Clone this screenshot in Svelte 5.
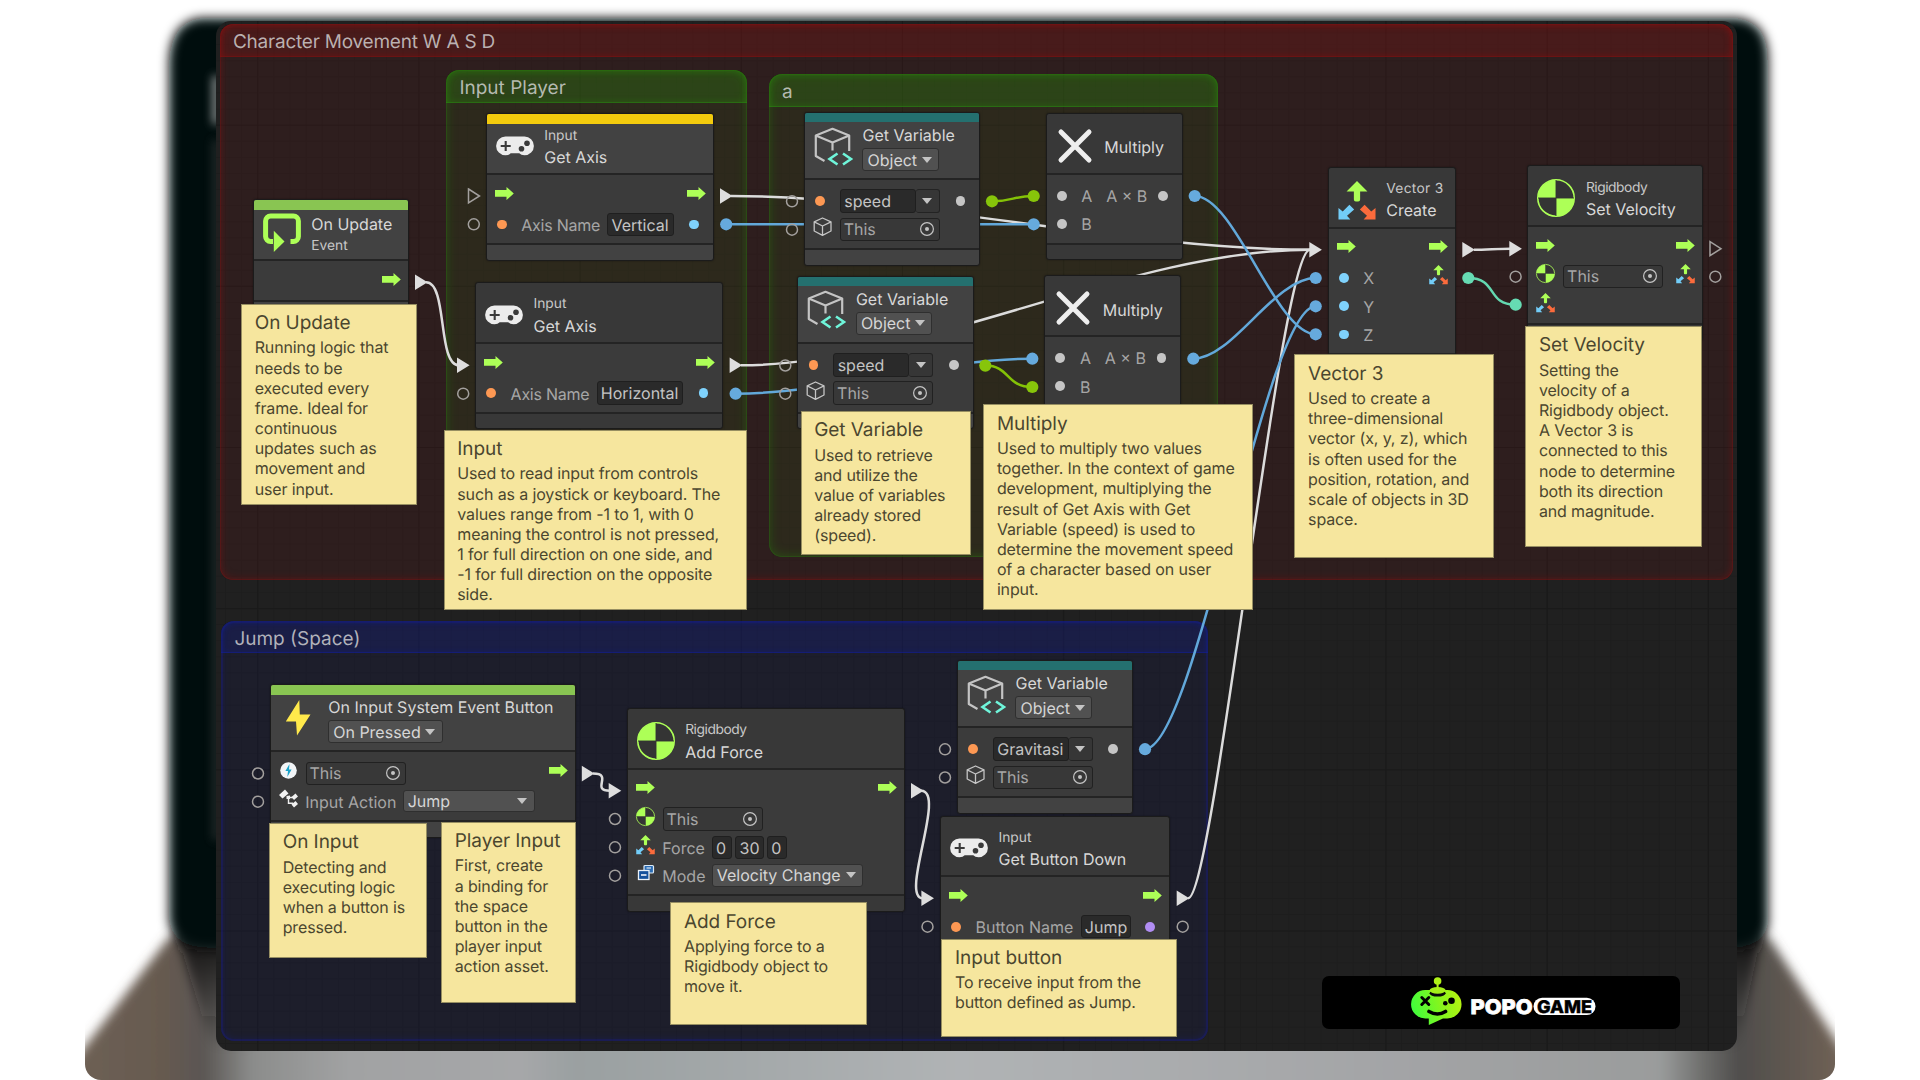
<script>
  // Comment groups of the graph, back to front.
  const groups = [
    { tone: 'red', title: 'Character Movement W A S D', x: 219.5, y: 24, w: 1513, h: 556 },
    { tone: 'green', title: 'Input Player', x: 446, y: 70, w: 301, h: 500 },
    { tone: 'green', title: 'a', x: 768.5, y: 74, w: 449.5, h: 483 },
    { tone: 'blue', title: 'Jump (Space)', x: 221, y: 620.5, w: 986.5, h: 420 }
  ];

  const flow = { in: 'flow', out: 'flow' };
  const variableRows = (name) => [
    { in: 'orange', combo: name, out: 'grey' },
    { in: 'cube', object: true }
  ];
  const multiplyRows = [
    { in: 'grey', label: 'A', end: 'A × B', out: 'grey' },
    { in: 'grey', label: 'B' }
  ];

  const nodes = [
    { x: 253, y: 200, w: 156.5, bar: '#89c552', icon: 'loop', title: 'On Update', after: 'Event', short: true, rows: [{ out: 'flow' }] },
    { x: 486, y: 114, w: 228.5, bar: '#f3cb0d', icon: 'pad', before: 'Input', title: 'Get Axis', rows: [flow, { in: 'orange', label: 'Axis Name', snug: true, field: 'Vertical', fw: 66.5, out: 'cyan' }] },
    { x: 475.3, y: 282.7, w: 248.5, icon: 'pad', before: 'Input', title: 'Get Axis', rows: [flow, { in: 'orange', label: 'Axis Name', snug: true, field: 'Horizontal', fw: 86.5, out: 'cyan' }] },
    { x: 804.3, y: 112.5, w: 176.5, bar: '#24706f', icon: 'variable', title: 'Get Variable', drop: 'Object', tall: true, rows: variableRows('speed') },
    { x: 797.7, y: 276.2, w: 176.5, bar: '#24706f', icon: 'variable', title: 'Get Variable', drop: 'Object', tall: true, rows: variableRows('speed') },
    { x: 1046, y: 113.5, w: 137.3, icon: 'times', title: 'Multiply', single: true, rows: multiplyRows },
    { x: 1044.6, y: 275.8, w: 137.3, icon: 'times', title: 'Multiply', single: true, rows: multiplyRows },
    { x: 1328, y: 167.3, w: 128.8, icon: 'vector', before: 'Vector 3', wide: true, title: 'Create', rows: [flow, { in: 'cyan', label: 'X', out: 'vector' }, { in: 'cyan', label: 'Y' }, { in: 'cyan', label: 'Z' }] },
    { x: 1527.7, y: 166, w: 176, icon: 'body', before: 'Rigidbody', tight: true, title: 'Set Velocity', rows: [flow, { in: 'body', object: true, out: 'vector' }, { in: 'vector' }] },
    { x: 270, y: 684.6, w: 306.3, bar: '#89c552', icon: 'bolt', title: 'On Input System Event Button', drop: 'On Pressed', tall: true, rows: [{ in: 'player', object: true, out: 'flow' }, { in: 'action', label: 'Input Action', drop: 'Jump', dw: 132 }] },
    { x: 627, y: 708.6, w: 278.3, icon: 'body', before: 'Rigidbody', tight: true, title: 'Add Force', rows: [flow, { in: 'body', object: true }, { in: 'vector', label: 'Force', triple: ['0', '30', '0'] }, { in: 'enum', label: 'Mode', drop: 'Velocity Change', dw: 151.5 }] },
    { x: 957.3, y: 660.5, w: 176.3, bar: '#24706f', icon: 'variable', title: 'Get Variable', drop: 'Object', tall: true, rows: variableRows('Gravitasi') },
    { x: 940.3, y: 816.2, w: 230.3, icon: 'pad', before: 'Input', title: 'Get Button Down', rows: [flow, { in: 'orange', label: 'Button Name', field: 'Jump', fw: 50.5, out: 'violet' }] }
  ];

  const notes = [
    { x: 241, y: 303.7, w: 176, h: 201.3, title: 'On Update', text: 'Running logic that\nneeds to be\nexecuted every\nframe. Ideal for\ncontinuous\nupdates such as\nmovement and\nuser input.' },
    { x: 443.6, y: 429.7, w: 303.4, h: 180, title: 'Input', text: 'Used to read input from controls\nsuch as a joystick or keyboard. The\nvalues range from -1 to 1, with 0\nmeaning the control is not pressed,\n1 for full direction on one side, and\n-1 for full direction on the opposite\nside.' },
    { x: 800.5, y: 411, w: 170.9, h: 144, title: 'Get Variable', text: 'Used to retrieve\nand utilize the\nvalue of variables\nalready stored\n(speed).' },
    { x: 983.2, y: 404.3, w: 270, h: 205.3, title: 'Multiply', text: 'Used to multiply two values\ntogether. In the context of game\ndevelopment, multiplying the\nresult of Get Axis with Get\nVariable (speed) is used to\ndetermine the movement speed\nof a character based on user\ninput.' },
    { x: 1294.4, y: 354.3, w: 199.3, h: 203.4, title: 'Vector 3', text: 'Used to create a\nthree-dimensional\nvector (x, y, z), which\nis often used for the\nposition, rotation, and\nscale of objects in 3D\nspace.' },
    { x: 1525.2, y: 326, w: 176.7, h: 221, title: 'Set Velocity', text: 'Setting the\nvelocity of a\nRigidbody object.\nA Vector 3 is\nconnected to this\nnode to determine\nboth its direction\nand magnitude.' },
    { x: 269, y: 823, w: 157.7, h: 134.7, title: 'On Input', text: 'Detecting and\nexecuting logic\nwhen a button is\npressed.' },
    { x: 441, y: 821.7, w: 134.7, h: 181.5, title: 'Player Input', text: 'First, create\na binding for\nthe space\nbutton in the\nplayer input\naction asset.' },
    { x: 670.3, y: 902.3, w: 196.5, h: 122.5, title: 'Add Force', text: 'Applying force to a\nRigidbody object to\nmove it.' },
    { x: 941.3, y: 938.5, w: 235.6, h: 98.5, title: 'Input button', text: 'To receive input from the\nbutton defined as Jump.' }
  ];

  const wires = [
    ['w', 'M731 196C912 196 1128 249.7 1310 249.7'],
    ['w', 'M741 365.3C918 365.3 1130 249.7 1310 249.7'],
    ['w', 'M426 282.3C448 282.3 437 365.3 459 365.3'],
    ['w', 'M1474 249.7C1486 249.7 1498 248.7 1510 248.7'],
    ['w', 'M1188 898.3C1214 898.3 1280 249.7 1310 249.7'],
    ['w', 'M593 773.6C614 773.6 590 790.7 610 790.7'],
    ['w', 'M921 790.7C947 790.7 899 898.3 923 898.3'],
    ['b', 'M726 224.3H1034'],
    ['b', 'M735.5 393.7C830 393.7 938 358.7 1032 358.7'],
    ['b', 'M1194.7 196C1235 196 1276 334.3 1315.7 334.3'],
    ['b', 'M1193.3 358.7C1233 358.7 1274 278 1315.7 278'],
    ['b', 'M1145 749C1195 749 1266 306.3 1315.7 306.3'],
    ['g', 'M992 201.3C1014 201.3 1012 196 1034 196'],
    ['g', 'M985.3 365.6C1010 365.6 1006 387 1032.3 387'],
    ['t', 'M1468.3 278C1498 278 1486 304.7 1515.7 304.7']
  ];
  const tips = [[720, 196], [729.6, 365.3], [415, 282.3], [457, 365.3], [1309.3, 249.7], [1462.3, 249.7], [1509.3, 248.7], [581.8, 773.6], [608.7, 790.7], [911, 790.7], [921.4, 898.3], [1176.7, 898.3]];
  const idleTips = [[468.5, 196], [1710, 248.7]];
  const idlePorts = [[473.8, 224.3], [463.2, 393.7], [792, 201.3], [792, 229.7], [785.3, 365.5], [785.3, 393.7], [1515.6, 276.7], [1715.3, 276.7], [258, 773.5], [258, 801.7], [615, 819], [615, 847.3], [615, 875.7], [945, 749.3], [945, 777.5], [927.5, 926.7], [1182.7, 926.7]];
  const livePorts = [
    ['b', 726.2, 224.3], ['b', 735.6, 393.7], ['b', 1033.7, 224.3], ['b', 1032.3, 358.7], ['b', 1194.7, 196], ['b', 1193.3, 358.7],
    ['b', 1315.7, 278], ['b', 1315.7, 306.3], ['b', 1315.7, 334.3], ['b', 1145, 749.2], ['g', 992, 201.3], ['g', 1033.7, 196],
    ['g', 985.3, 365.6], ['g', 1032.3, 387], ['t', 1468.3, 278], ['t', 1515.7, 304.7]
  ];
</script>

{#snippet arrow()}
  <svg class="glyph" viewBox="0 0 19 19"><path d="M0 6h11.5V3l7.3 6.5-7.3 6.5v-3.2H0z" fill="#adff57" /></svg>
{/snippet}

{#snippet vector(size)}
  <svg class={size} viewBox="0 0 40 40">
    <path d="M20 0 31 11H23.3V19.500a2 2 0 0 1-2 2H18.700a2 2 0 0 1-2-2V11H9z" fill="#adff57" />
    <path d="M12 25 17 30 9.500 36.500 13 40.500H0.500V28.500L5 32z" fill="#72cdf8" />
    <path d="M28 25 23 30 30.500 36.500 27 40.500H39.500V28.500L35 32z" fill="#fb6b3c" />
  </svg>
{/snippet}

{#snippet body(size)}
  <svg class={size} viewBox="0 0 38 38">
    <circle cx="19" cy="19" r="18.200" fill="#343434" stroke="#adff57" stroke-width="1.600" />
    <path d="M19 19V.800A18.200 18.200 0 0 0 .800 19zM19 19V37.200A18.200 18.200 0 0 0 37.200 19z" fill="#adff57" />
    <path d="M19 1V37M1 19H37" stroke="#343434" stroke-width=".9" />
  </svg>
{/snippet}

{#snippet glyph(kind)}
  {#if kind === 'flow'}
    <span class="slot">{@render arrow()}</span>
  {:else if kind === 'vector'}
    <span class="slot">{@render vector('glyph')}</span>
  {:else if kind === 'body'}
    <span class="slot">{@render body('glyph')}</span>
  {:else if kind === 'cube'}
    <span class="slot">
      <svg class="glyph" viewBox="0 0 19 19" fill="none" stroke="#c4c4c4" stroke-width="1.300" stroke-linejoin="round"><path d="M9.500 1 18 4.800V14L9.500 18.400 1.200 14V4.800zM1.200 4.800 9.500 9 18 4.800M9.500 9V18" /></svg>
    </span>
  {:else if kind === 'player'}
    <span class="slot">
      <svg class="glyph" viewBox="0 0 19 19"><circle cx="9.500" cy="9.500" r="8.300" fill="#f2f5f7" /><path d="M10.500 3 6.400 10H9L8.300 16 12.600 8.500H10z" fill="#1ba3c9" /></svg>
    </span>
  {:else if kind === 'action'}
    <span class="slot">
      <svg class="glyph" viewBox="0 0 19 19"><path d="M9.500 8.500V14.200H14M9.500 8.500H14" fill="none" stroke="#eee" stroke-width="1.400" /><path d="M0 6 6 .500 9.500 4.500 3.500 9.500zM12.500 8 16.500 4.500 19 7.500 15 11zM12.500 15.500 16.500 12 19 15 15 18.500z" fill="#f0f0f0" /><path d="M7.500 7 11 6.500 11 10 7.500 10z" fill="#eee" /></svg>
    </span>
  {:else if kind === 'enum'}
    <span class="slot">
      <svg class="glyph" viewBox="0 0 19 19"><rect x="8" y="2.500" width="9.500" height="7.500" rx="1" fill="#2b6cb3" stroke="#dce9f5" stroke-width="1.200" /><path d="M10.500 5H15" stroke="#fff" stroke-width="1.200" /><rect x="2.500" y="7.500" width="10.500" height="9" fill="#15529c" stroke="#e9f1f8" stroke-width="1.300" /><path d="M5 12H10.500" stroke="#fff" stroke-width="1.600" /></svg>
    </span>
  {:else if kind}
    <span class="slot"><i class="dot {kind}"></i></span>
  {:else}
    <span class="slot"></span>
  {/if}
{/snippet}

{#snippet headIcon(kind)}
  {#if kind === 'pad'}
    <svg class="big" viewBox="0 0 38 38">
      <path d="M9.500 9.500H28.500A9.400 9.400 0 0 1 28.500 28.300Q25 28.300 23.300 26.300H14.700Q13 28.300 9.500 28.300A9.400 9.400 0 0 1 9.500 9.500z" fill="#ececec" />
      <path d="M9.700 14V24M4.700 19H14.700" stroke="#3a3a3a" stroke-width="2.100" />
      <circle cx="31" cy="16.300" r="2.800" fill="#3a3a3a" /><circle cx="25.500" cy="21.700" r="2.800" fill="#3a3a3a" />
    </svg>
  {:else if kind === 'loop'}
    <svg class="big" viewBox="0 0 38 38">
      <path d="M10 28.500H7.500A5 5 0 0 1 2.600 23.500V8A5 5 0 0 1 7.600 3H30.400A5 5 0 0 1 35.400 8V23.500A5 5 0 0 1 30.400 28.500H27.500" fill="none" stroke="#adff57" stroke-width="5" />
      <path d="M10.800 17.800 21.500 28.500 10.800 39z" fill="#adff57" />
    </svg>
  {:else if kind === 'variable'}
    <svg class="big" viewBox="0 0 38 38" fill="none">
      <path d="M10.500 33 1.800 28V7.500L18.500 .800 35.200 7.500V23M1.800 7.500 18.500 14.500 35.200 7.500M18.500 14.500V22.500" stroke="#c4c4c4" stroke-width="2.200" stroke-linejoin="round" />
      <path d="M23.500 25.500 15.500 31 23.500 36.500M29 25.500 37 31 29 36.500" stroke="#6ff5da" stroke-width="2.600" />
    </svg>
  {:else if kind === 'times'}
    <svg class="big" viewBox="0 0 38 38"><path d="M5 5 33 33M33 5 5 33" stroke="#eee" stroke-width="5" stroke-linecap="round" /></svg>
  {:else if kind === 'vector'}
    {@render vector('big')}
  {:else if kind === 'body'}
    {@render body('big')}
  {:else}
    <svg class="big" viewBox="0 0 38 38"><path d="M19.300 0 5.800 21.500H16L17 35.500 30.500 14.500H19.800z" fill="#ffe94b" /></svg>
  {/if}
{/snippet}

{#snippet caret()}
  <svg class="caret" viewBox="0 0 10 6"><path d="M0 0H10L5 6z" fill="#c4c4c4" /></svg>
{/snippet}

{#snippet target()}
  <svg class="target" viewBox="0 0 16 16"><circle cx="8" cy="8" r="6.400" fill="none" stroke="#c4c4c4" stroke-width="1.200" /><circle cx="8" cy="8" r="2" fill="#c4c4c4" /></svg>
{/snippet}

<main>
  <svg class="laptop" viewBox="0 0 1920 1080" aria-hidden="true">
    <defs>
      <linearGradient id="deck" x1="85" x2="1835" y1="0" y2="0" gradientUnits="userSpaceOnUse">
        <stop offset="0" stop-color="#6d5f53" /><stop offset=".045" stop-color="#665a50" /><stop offset=".068" stop-color="#5a5653" />
        <stop offset=".095" stop-color="#8b8c8b" /><stop offset=".15" stop-color="#a1a2a3" /><stop offset=".25" stop-color="#a6a7a9" />
        <stop offset=".28" stop-color="#9aa0a1" /><stop offset=".5" stop-color="#b0b3b5" /><stop offset=".75" stop-color="#a3a4a6" />
        <stop offset=".9" stop-color="#9a9c9c" /><stop offset=".925" stop-color="#6d6d6b" /><stop offset=".945" stop-color="#4f4d4c" />
        <stop offset=".97" stop-color="#5d5650" /><stop offset="1" stop-color="#6e6054" />
      </linearGradient>
      <linearGradient id="fade" x1="0" x2="0" y1="930" y2="1050" gradientUnits="userSpaceOnUse">
        <stop offset="0" stop-color="#141414" stop-opacity="1" /><stop offset="1" stop-color="#141414" stop-opacity="0" />
      </linearGradient>
      <filter id="soft" x="-10%" y="-10%" width="120%" height="120%"><feGaussianBlur stdDeviation="5.500" /></filter>
      <filter id="softer" x="-400%" y="-30%" width="900%" height="160%"><feGaussianBlur stdDeviation="5" /></filter>
      <clipPath id="base"><path d="M85 0H1835V1064A16 16 0 0 1 1819 1080H101A16 16 0 0 1 85 1064z" /></clipPath>
    </defs>
    <g clip-path="url(#base)">
      <path d="M170 936H1768L1870 1092V1130H50V1092z" fill="url(#deck)" filter="url(#soft)" />
      <path d="M176 930H250V1060H215z" fill="url(#fade)" filter="url(#soft)" />
      <path d="M1690 930H1762L1735 1060H1690z" fill="url(#fade)" filter="url(#soft)" />
      <path d="M200 18H1738Q1768 22 1768 60V925Q1764 945 1737 948H208Q172 948 169 920V60Q171 22 200 18z" fill="#040707" filter="url(#soft)" />
      <rect x="213" y="76" width="6" height="48" fill="#ddd" opacity=".8" filter="url(#softer)" />
      <rect x="213" y="140" width="6" height="700" fill="#555" opacity=".5" filter="url(#softer)" />
    </g>
  </svg>

  <section class="canvas"></section>

  {#each groups as g}
    <section class="group {g.tone}" style="left:{g.x}px;top:{g.y}px;width:{g.w}px;height:{g.h}px"><h2>{g.title}</h2></section>
  {/each}

  <svg class="layer" viewBox="0 0 1920 1080" aria-hidden="true">
    {#each wires as [tone, d]}<path class="wire s-{tone}" {d} />{/each}
  </svg>

  {#each nodes as n}
    <article class="node" class:plain={!n.bar} style="left:{n.x}px;top:{n.y}px;width:{n.w}px">
      {#if n.bar}<div class="bar" style="background:{n.bar}"></div>{/if}
      <header class:tall={n.tall}>
        {@render headIcon(n.icon)}
        <div class="titles" class:single={n.single}>
          {#if n.before}<small class:tight={n.tight} class:wide={n.wide}>{n.before}</small>{/if}
          <b>{n.title}</b>
          {#if n.after}<small>{n.after}</small>{/if}
          {#if n.drop}<span class="drop"><span>{n.drop}</span>{@render caret()}</span>{/if}
        </div>
      </header>
      <div class="rows" class:short={n.short}>
        {#each n.rows as r}
          <div class="row">
            {@render glyph(r.in)}
            {#if r.label}<span class="label" class:snug={r.snug}>{r.label}</span>{/if}
            {#if r.field}<span class="field" style="width:{r.fw}px">{r.field}</span>{/if}
            {#if r.triple}<span class="triple">{#each r.triple as v}<span class="field num">{v}</span>{/each}</span>{/if}
            {#if r.combo}<span class="combo"><span class="field">{r.combo}</span><span class="pick">{@render caret()}</span></span>{/if}
            {#if r.object}<span class="object"><span>This</span>{@render target()}</span>{/if}
            {#if r.drop}<span class="drop" style="width:{r.dw}px"><span>{r.drop}</span>{@render caret()}</span>{/if}
            <span class="gap"></span>
            {#if r.end}<span class="label">{r.end}</span>{/if}
            {#if r.out}{@render glyph(r.out)}{/if}
          </div>
        {/each}
      </div>
      <footer></footer>
    </article>
  {/each}

  <svg class="layer" viewBox="0 0 1920 1080" aria-hidden="true">
    {#each tips as [x, y]}<path d="M{x} {y - 7.8}L{x + 12.6} {y}L{x} {y + 7.8}z" fill="#dedede" />{/each}
    {#each idleTips as [x, y]}<path d="M{x} {y - 7}L{x + 11} {y}L{x} {y + 7}z" class="idle" />{/each}
    {#each idlePorts as [x, y]}<circle cx={x} cy={y} r="5.500" class="idle" />{/each}
    {#each livePorts as [tone, x, y]}<circle cx={x} cy={y} r="6.100" class="f-{tone}" />{/each}
  </svg>

  {#each notes as n}
    <aside class="note" style="left:{n.x}px;top:{n.y}px;width:{n.w}px;height:{n.h}px">
      <h3>{n.title}</h3>
      <p>{n.text}</p>
    </aside>
  {/each}

  <div class="brand">
    <svg viewBox="0 0 190 53" role="img" aria-label="Popogame">
      <defs><linearGradient id="lime" x1="0" x2="1" y1=".6" y2=".4"><stop offset="0" stop-color="#3dfc3e" /><stop offset=".6" stop-color="#86f51d" /><stop offset="1" stop-color="#b4f212" /></linearGradient></defs>
      <path d="M16.300 14H38.300A14 14 0 0 1 38.300 42.500H34L19.800 49V42.500H16.300A14 14 0 0 1 16.300 14z" fill="url(#lime)" />
      <ellipse cx="28.600" cy="17.300" rx="8" ry="3.300" fill="#0a0a0a" />
      <ellipse cx="28.600" cy="14.300" rx="8" ry="3.400" fill="#a3ee1a" />
      <path d="M28.600 6V14" stroke="#b0f218" stroke-width="2" /><circle cx="28.600" cy="5" r="3.800" fill="#b0f218" />
      <path d="M12.800 21.500 19.800 28.500M19.800 21.500 12.800 28.500" stroke="#000" stroke-width="3" stroke-linecap="round" />
      <circle cx="42.500" cy="24.700" r="3.300" /><circle cx="36.300" cy="27.200" r="2.300" />
      <path d="M20 35.500Q28.500 40.500 36.500 35.500" fill="none" stroke="#000" stroke-width="3.600" stroke-linecap="round" />
      <text x="61.500" y="37.500" textLength="62" lengthAdjust="spacingAndGlyphs" fill="#fff" stroke="#fff">POPO</text>
      <rect x="124.500" y="21.700" width="62" height="17.300" rx="8.600" fill="#fff" />
      <text x="128" y="36.600" textLength="55" lengthAdjust="spacingAndGlyphs" class="small">GAME</text>
    </svg>
  </div>
</main>

<style>
  :global(body) { margin: 0; background: #fff; }
  main { position: relative; width: 1920px; height: 1080px; overflow: hidden; background: #fff; font-family: Inter, sans-serif; font-size: 16px; color: #c4c4c4; text-rendering: geometricPrecision; }
  .laptop, .layer { position: absolute; inset: 0; width: 1920px; height: 1080px; }
  .canvas {
    position: absolute; left: 216px; top: 21px; width: 1521px; height: 1030px; border-radius: 15px; background-color: #202020;
    background-image:
      linear-gradient(90deg, #191919 1.3px, transparent 1.3px), linear-gradient(#191919 1.3px, transparent 1.3px),
      linear-gradient(90deg, #1d1d1d 1px, transparent 1px), linear-gradient(#1d1d1d 1px, transparent 1px);
    background-size: 161.2px 161.2px, 161.2px 161.2px, 16.12px 16.12px, 16.12px 16.12px;
    background-position: 41.3px 0, 0 103.7px, 41.3px 0, 0 103.7px;
  }

  .group { position: absolute; box-sizing: border-box; border-radius: 13px; }
  .group h2 { margin: 0; box-sizing: border-box; height: 32.6px; padding: 2px 0 0 13.4px; border-radius: 13px 13px 0 0; font-size: 19px; font-weight: 400; line-height: 32px; color: rgba(220, 220, 220, .78); }
  .red { background: rgba(180, 20, 20, .1); box-shadow: inset 0 0 9px rgba(150, 15, 15, .5), inset 0 0 0 1px rgba(120, 20, 20, .3); }
  .red h2 { letter-spacing: -.22px; background: rgba(150, 20, 20, .25); box-shadow: inset 0 0 7px rgba(150, 10, 10, .5), inset 0 -1px rgba(120, 20, 20, .5); }
  .green { background: rgba(40, 150, 20, .1); box-shadow: inset 0 0 12px rgba(40, 130, 10, .45), inset 0 0 0 1px rgba(40, 110, 20, .3); }
  .green h2 { background: rgba(44, 150, 10, .25); box-shadow: inset 0 0 7px rgba(40, 150, 10, .4), inset 0 -1px rgba(40, 130, 20, .5); }
  .blue { background: rgba(10, 20, 150, .1); box-shadow: inset 0 0 9px rgba(20, 30, 170, .35), inset 0 0 0 2px rgba(25, 30, 130, .3); }
  .blue h2 { background: rgba(20, 30, 150, .25); box-shadow: inset 0 0 6px rgba(15, 30, 150, .45), inset 0 -1px rgba(20, 30, 150, .5); }

  .wire { fill: none; stroke-width: 2.5; }
  .s-w { stroke: #dcdcdc; }
  .s-b { stroke: #62a8da; }
  .s-g { stroke: #84c207; }
  .s-t { stroke: #63d8b0; }
  .f-b { fill: #66aadd; }
  .f-g { fill: #87c50a; }
  .f-t { fill: #66dbb3; }
  .idle { fill: none; stroke: #a3a09e; stroke-width: 1.5; }

  .node { position: absolute; box-sizing: border-box; margin: -.6px 0 0 -.5px; border: 1.5px solid #1b1b1b; border-radius: 3px; background: #424242; overflow: hidden; box-shadow: 0 0 2px rgba(0, 0, 0, .4); }
  .node.plain { background: #383838; }
  .bar { height: 9.5px; margin-bottom: -9.5px; }
  header { display: flex; gap: 10.7px; box-sizing: border-box; height: 60.8px; padding: 12.9px 8px 0 9px; border-bottom: 2px solid #242424; }
  header.tall { height: 67.3px; padding-top: 14.9px; }
  .big { flex: none; width: 38px; height: 38px; overflow: visible; }
  .titles { display: flex; flex-direction: column; align-items: flex-start; margin-top: -1.8px; }
  header.tall .titles { margin-top: -4.8px; }
  .titles.single { margin-top: 8.6px; }
  .titles b { font-weight: 400; line-height: 24px; color: #d8d8d8; white-space: nowrap; }
  .titles small { font-size: 13.8px; line-height: 20px; color: #c8c8c8; white-space: nowrap; }
  .titles small + b { margin-top: -.5px; }
  .titles small.tight { letter-spacing: -.45px; }
  .titles small.wide { letter-spacing: .3px; }
  .titles .drop { margin-top: 1.4px; }

  .rows { padding: 6.8px 7.2px 4.4px 8px; background: #3b3b3b; border-bottom: 2px solid #242424; }
  .rows.short { padding-bottom: 3.5px; }
  .row { display: flex; align-items: center; gap: 8.3px; height: 28.33px; }
  .slot { flex: none; width: 19px; display: flex; align-items: center; }
  .glyph { width: 19px; height: 19px; overflow: visible; margin-top: -5.6px; }
  .dot { width: 9.8px; height: 9.8px; margin: 0 0 0 2.4px; border-radius: 50%; }
  .orange { background: #fd9853; }
  .cyan { background: #7fd2fc; }
  .grey { background: #c5c5c5; }
  .violet { background: #b18df3; }
  .gap { flex: 1; margin: 0 -8.3px; }
  .label { color: #a6a6a6; line-height: 20px; padding-top: 1px; margin-left: -.5px; white-space: nowrap; }
  .label.snug { letter-spacing: -.25px; }
  footer { height: 14.5px; }

  .field { box-sizing: border-box; height: 23.5px; padding: 1px 0 0 3.2px; border: 1.3px solid #1f1f1f; border-radius: 3px; background: #2a2a2a; line-height: 20px; color: #c4c4c4; white-space: nowrap; }
  .label + .field { margin-left: -1px; }
  .triple { display: flex; gap: 3.2px; margin-left: -1.5px; }
  .num { padding-right: 3.2px; min-width: 20.5px; }
  .combo { display: flex; width: 99.5px; height: 23.5px; }
  .combo .field { width: 76px; }
  .pick { flex: 1; box-sizing: border-box; display: flex; align-items: center; justify-content: center; border: 1.3px solid #232323; border-left: 0; border-radius: 3px; background: #363636; }
  .object { box-sizing: border-box; display: flex; justify-content: space-between; align-items: center; width: 100px; height: 23.5px; padding: 0 4.3px 0 2.6px; border: 1.6px solid #212121; border-radius: 3px; background: #383838; color: #a6a6a6; line-height: 20px; }
  .target { width: 16px; height: 16px; }
  .caret { flex: none; width: 10px; height: 6px; }
  .drop { box-sizing: border-box; display: flex; align-items: center; justify-content: space-between; gap: 4.5px; height: 22.6px; padding: 0 6.5px 0 4px; border: 1.2px solid #2f2f2f; border-radius: 3px; background: #515151; color: #d6d6d6; line-height: 20px; white-space: nowrap; }
  .row .drop { margin: -1px 0 0 -2px; }

  .note { position: absolute; box-sizing: border-box; border: 1px solid #978f62; background: #f6e69e; color: #4b462f; padding: 6.3px 0 0 12.7px; }
  .note h3 { margin: 0 0 2.4px; font-size: 19px; font-weight: 400; line-height: 24px; white-space: nowrap; letter-spacing: -.06px; }
  .note p { margin: 0; font-size: 16px; line-height: 20.17px; letter-spacing: -.13px; white-space: pre; }

  .brand { position: absolute; left: 1322px; top: 976px; width: 358px; height: 53px; display: flex; justify-content: center; border-radius: 7px; background: #000; }
  .brand svg { width: 190px; height: 53px; margin-left: 6px; overflow: visible; }
  .brand text { font: 800 20px Inter, sans-serif; stroke-width: .8px; }
  .brand .small { font-size: 17.5px; stroke: #000; stroke-width: .4px; }
</style>
